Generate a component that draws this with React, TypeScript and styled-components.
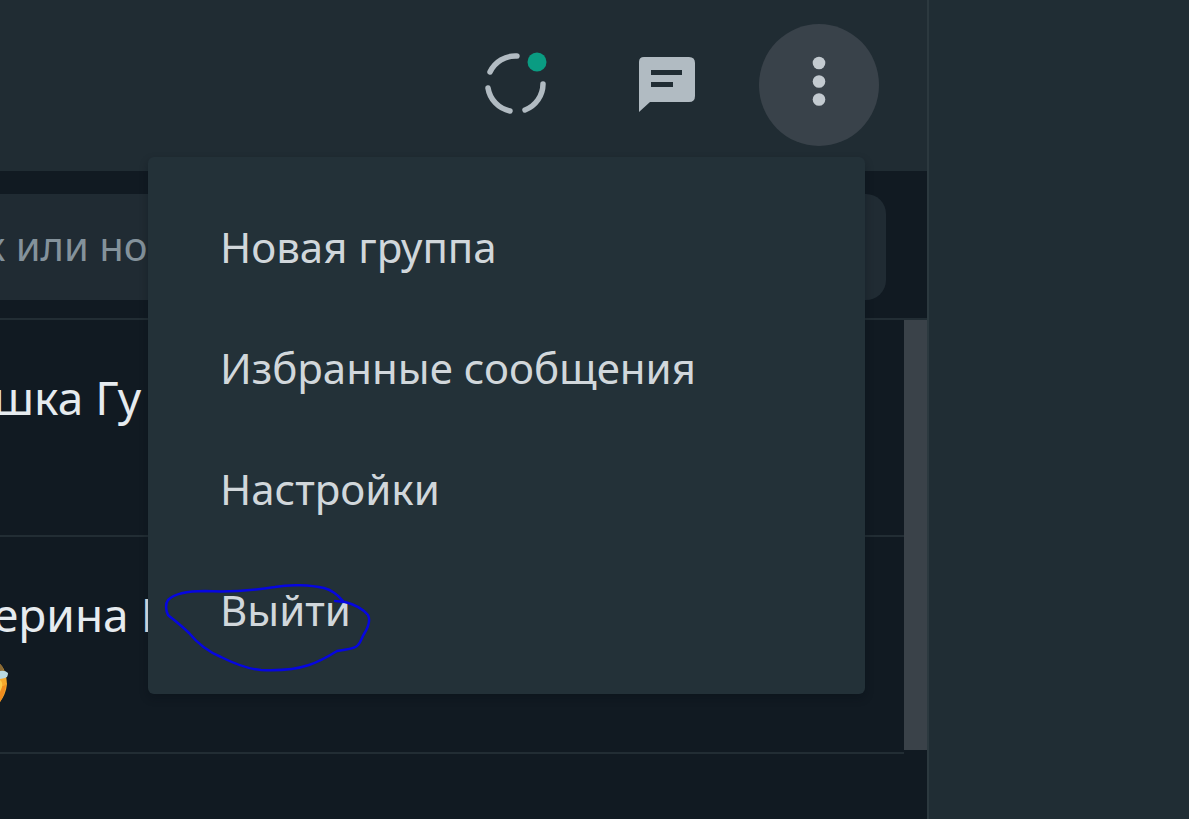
import React from "react";
import styled, { createGlobalStyle } from "styled-components";

const GlobalStyle = createGlobalStyle`
  * { box-sizing: border-box; }
  body {
    margin: 0;
    background: #111a22;
    font-family: "Noto Sans", "Open Sans", sans-serif;
  }
  button, input { font: inherit; border: 0; margin: 0; padding: 0; }
`;

const Page = styled.div`
  display: grid;
  grid-template-columns: minmax(0, 1fr) 262px;
  min-height: 100vh;
  overflow: hidden;
`;

const ChatPanel = styled.section`
  position: relative;
  background: #111a22;
`;

const EmptyPane = styled.main`
  background: #202d34;
  border-left: 2px solid #2c393f;
`;

const Header = styled.header`
  display: flex;
  justify-content: flex-end;
  align-items: center;
  gap: 32px;
  height: 171px;
  padding: 0 48px 2px 0;
  background: #202c33;
`;

const IconButton = styled.button<{ $active?: boolean }>`
  display: grid;
  place-items: center;
  width: 120px;
  height: 122px;
  border-radius: 50%;
  color: #b1bbc2;
  background: ${(p) => (p.$active ? "#39424a" : "transparent")};
`;

const SearchArea = styled.div`
  height: 149px;
  padding: 23px 41px 20px 0;
  border-bottom: 2px solid #222d34;
`;

const SearchBox = styled.div`
  height: 106px;
  border-radius: 0 20px 20px 0;
  background: #202b33;
  overflow: hidden;
`;

const SearchInput = styled.input`
  display: block;
  width: 100%;
  height: 102px;
  margin-left: -16px;
  background: transparent;
  color: #84929b;
  font-size: 40px;
  outline: 0;
  &::placeholder { color: #84929b; opacity: 1; }
`;

const ListArea = styled.div`
  display: flex;
  align-items: flex-start;
`;

const ChatList = styled.ul`
  flex: 1;
  min-width: 0;
  margin: 0;
  padding: 0;
  list-style: none;
`;

const ChatRow = styled.li`
  height: 217px;
  padding-top: 45px;
  border-bottom: 2px solid #222d34;
`;

const ChatName = styled.div`
  margin-left: -7px;
  color: #e6ebef;
  font-size: 46px;
  line-height: 64px;
  white-space: nowrap;
`;

const Preview = styled.div`
  display: flex;
  padding-top: 16px;
`;

const ScrollThumb = styled.div`
  width: 23px;
  height: 430px;
  background: #3a4249;
`;

const Menu = styled.div`
  position: absolute;
  top: 157px;
  right: 62px;
  width: 717px;
  padding: 29px 0 24px;
  border-radius: 6px;
  background: #233138;
  box-shadow: 0 4px 8px rgba(8, 14, 19, 0.3);
`;

const MenuItem = styled.button`
  display: block;
  width: 100%;
  height: 121px;
  padding-left: 72px;
  background: transparent;
  color: #d1d7db;
  font-size: 42px;
  line-height: 60px;
  text-align: left;
  white-space: nowrap;
`;

const Scribble = styled.svg`
  position: absolute;
  left: 12px;
  bottom: 18px;
  pointer-events: none;
`;

const StatusIcon = () => (
  <svg width="76" height="76" viewBox="477 47 76 76" fill="none" aria-hidden="true">
    <g stroke="#b1bbc2" strokeWidth="5.5" strokeLinecap="round">
      <path d="M490 72A28 28 0 0 1 517 56" />
      <path d="M488 88A28 28 0 0 0 510 111" />
      <path d="M543 84A28 28 0 0 1 525 110" />
    </g>
    <circle cx="537" cy="62" r="9.5" fill="#0a9c82" />
  </svg>
);

const ChatIcon = () => (
  <svg width="60" height="60" viewBox="637 55 60 60" aria-hidden="true">
    <path d="M644 57H689Q695 57 695 63V96Q695 102 689 102H650L639 112V62Q639 57 644 57Z" fill="#b1bbc2" />
    <path d="M651 70H682V75H651ZM651 82H673V87H651Z" fill="#202c33" />
  </svg>
);

const DotsIcon = () => (
  <svg width="20" height="60" viewBox="809 55 20 60" fill="#c3cad0" aria-hidden="true">
    <circle cx="819" cy="63" r="6.3" />
    <circle cx="819" cy="81.5" r="6.3" />
    <circle cx="819" cy="99.5" r="6.3" />
  </svg>
);

const EmojiEdge = () => (
  <svg width="10" height="42" viewBox="0 662 10 42" aria-hidden="true">
    <path d="M0 664Q4 668 6 675L7 684Q6 694 0 702Z" fill="#f5a92c" />
    <path d="M0 664Q3 666 4 671L0 671Z" fill="#8a6a35" />
    <path d="M0 671Q5 670 8 673Q8 677 5 678L0 679Z" fill="#b9d9e0" />
    <path d="M0 686Q4 687 6 684Q5 694 0 702Z" fill="#f08c1e" />
    <path d="M0 680Q3 682 2 687L0 692Z" fill="#fbc94a" />
  </svg>
);

const chats = [
  { name: "шка Гу", emoji: false },
  { name: "ерина П", emoji: true },
];

const menuItems = ["Новая группа", "Избранные сообщения", "Настройки", "Выйти"];

export default function App() {
  return (
    <>
      <GlobalStyle />
      <Page>
        <ChatPanel>
          <Header>
            <IconButton aria-label="Статус"><StatusIcon /></IconButton>
            <IconButton aria-label="Новый чат"><ChatIcon /></IconButton>
            <IconButton aria-label="Меню" $active><DotsIcon /></IconButton>
          </Header>
          <SearchArea>
            <SearchBox>
              <SearchInput type="text" aria-label="Поиск" placeholder="к или но" />
            </SearchBox>
          </SearchArea>
          <ListArea>
            <ChatList>
              {chats.map((chat) => (
                <ChatRow key={chat.name}>
                  <ChatName>{chat.name}</ChatName>
                  {chat.emoji && <Preview><EmojiEdge /></Preview>}
                </ChatRow>
              ))}
            </ChatList>
            <ScrollThumb />
          </ListArea>
          <Menu>
            {menuItems.map((item) => (
              <MenuItem key={item}>{item}</MenuItem>
            ))}
            <Scribble width="216" height="96" viewBox="160 580 216 96" fill="none" aria-hidden="true">
              <path
                d="M343 601C337 594 332 590 324 588C311 585 290 584 275 587C250 591 225 592 205 591C187 591 174 594 168 600C165 604 166 611 168 615C174 620 182 626 189 633C198 644 209 652 221 657C235 664 248 669 261 670C281 671 297 669 309 665C321 661 329 656 337 651C345 649 354 650 358 645C361 642 362 637 364 634C369 626 370 619 368 615C362 608 353 604 345 602L335 601"
                stroke="#0606e0"
                strokeWidth="2.5"
                strokeLinecap="round"
                strokeLinejoin="round"
              />
            </Scribble>
          </Menu>
        </ChatPanel>
        <EmptyPane />
      </Page>
    </>
  );
}
